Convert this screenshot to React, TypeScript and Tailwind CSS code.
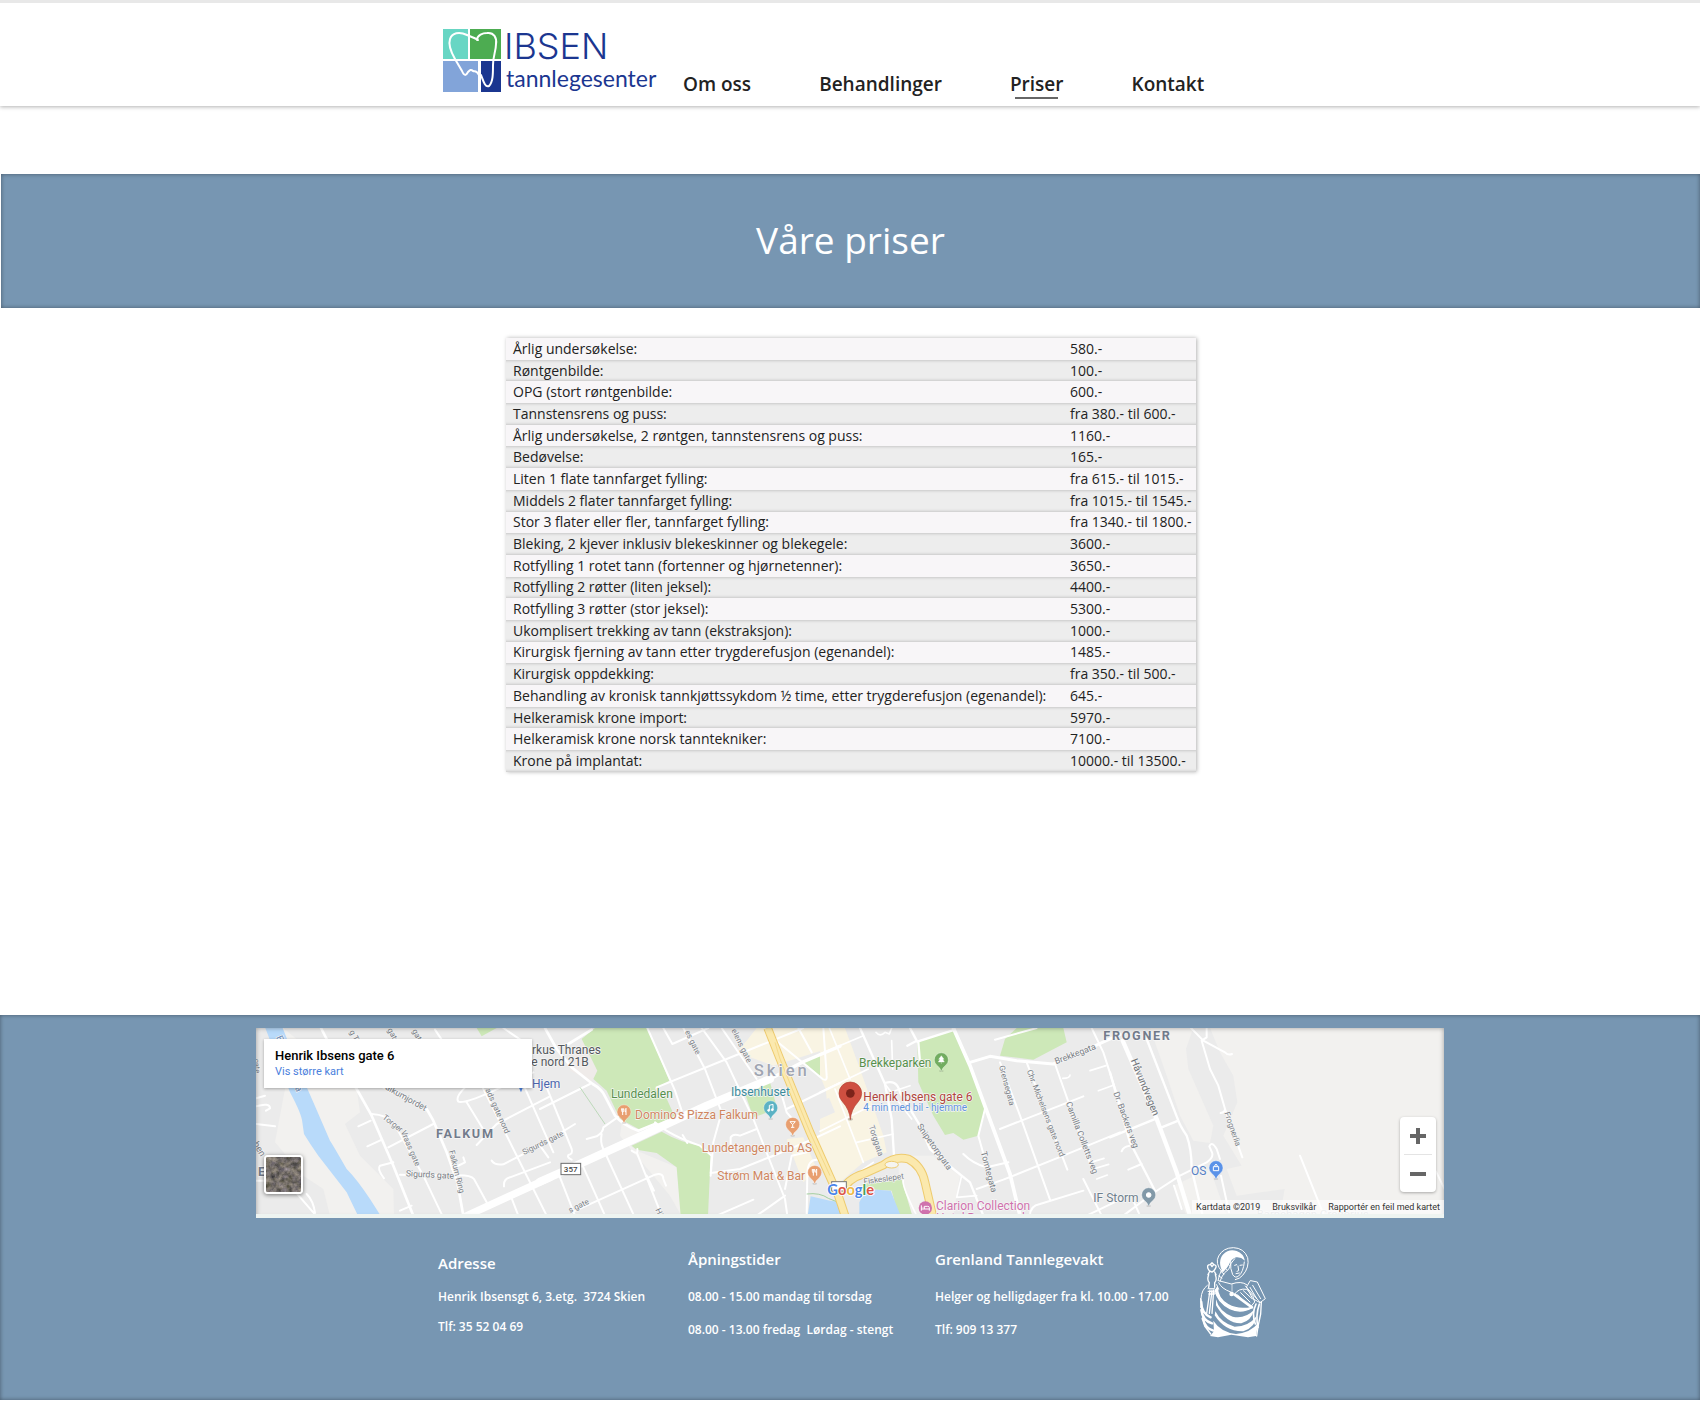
import { type ReactNode } from "react";

const prices: [string, string][] = [
  ["Årlig undersøkelse:", "580.-"],
  ["Røntgenbilde:", "100.-"],
  ["OPG (stort røntgenbilde:", "600.-"],
  ["Tannstensrens og puss:", "fra 380.- til 600.-"],
  ["Årlig undersøkelse, 2 røntgen, tannstensrens og puss:", "1160.-"],
  ["Bedøvelse:", "165.-"],
  ["Liten 1 flate tannfarget fylling:", "fra 615.- til 1015.-"],
  ["Middels 2 flater tannfarget fylling:", "fra 1015.- til 1545.-"],
  ["Stor 3 flater eller fler, tannfarget fylling:", "fra 1340.- til 1800.-"],
  ["Bleking, 2 kjever inklusiv blekeskinner og blekegele:", "3600.-"],
  ["Rotfylling 1 rotet tann (fortenner og hjørnetenner):", "3650.-"],
  ["Rotfylling 2 røtter (liten jeksel):", "4400.-"],
  ["Rotfylling 3 røtter (stor jeksel):", "5300.-"],
  ["Ukomplisert trekking av tann (ekstraksjon):", "1000.-"],
  ["Kirurgisk fjerning av tann etter trygderefusjon (egenandel):", "1485.-"],
  ["Kirurgisk oppdekking:", "fra 350.- til 500.-"],
  ["Behandling av kronisk tannkjøttssykdom ½ time, etter trygderefusjon (egenandel):", "645.-"],
  ["Helkeramisk krone import:", "5970.-"],
  ["Helkeramisk krone norsk tanntekniker:", "7100.-"],
  ["Krone på implantat:", "10000.- til 13500.-"],
];

const nav = ["Om oss", "Behandlinger", "Priser", "Kontakt"];

function Logo() {
  return (
    <svg viewBox="0 0 216 72" className="h-[72px] w-[216px] overflow-visible" role="img" aria-label="Ibsen tannlegesenter">
      <rect x="1" y="1" width="25" height="30" fill="#68d6c4" />
      <rect x="28" y="1" width="31" height="30" fill="#4dac51" />
      <rect x="1" y="33" width="35" height="31" fill="#82a4d9" />
      <rect x="39" y="33" width="20" height="31" fill="#1b3690" />
      <path
        d="M36 12 C31 9 29 9 25 7 C17 3 10 5 8 11 C6 17 9 24 13 31 L20 43 C22 48 24 48 26 44 C28 42 29 41 31 43 C33 44 34 42 37 47 M35 12 C35 7 41 5 45 5 C52 4 55 10 54 16 C54 23 51 28 51 37 C51 46 51 54 47 58 C43 60 41 52 39 47"
        fill="none"
        stroke="#fff"
        strokeWidth="2"
        strokeLinecap="round"
      />
      <text x="62" y="31" fontFamily="Inter, sans-serif" fontSize="36" fontWeight="300" fill="#1b3690">
        IBSEN
      </text>
      <text x="64" y="59" fontFamily="Lato, sans-serif" fontSize="23" fill="#1b3690">
        tannlegesenter
      </text>
    </svg>
  );
}

/* Map drawing. One unit is a third of a pixel; sections are laid out west to east. */
const SECTIONS = ["translate(0 0)", "translate(870 0)", "translate(1710 0)", "translate(2580 0)"];

type Shape = { fill: string; d: string };
const LIGHT = "#f2f1ef";
const GREEN = "#cde8b8";
const YELLOW = "#f9f4e3";
const WATER = "#b8dafa";

const areas: Shape[][] = [
  [
    { fill: LIGHT, d: "M60 57L100 57 320 240 330 310 285 345 330 440 430 540 432 620 240 620 220 540 160 500 75 400 105 240Z" },
    { fill: WATER, d: "M46 57L120 250Q155 315 157 340L162 375Q180 405 205 440L290 550 324 620 392 620 360 570Q320 510 290 480 250 410 240 395L190 280 155 200 98 57Z" },
    { fill: GREEN, d: "M680 57H740L695 82Z" },
  ],
  [
    { fill: "#efebe9", d: "M100 140L130 95 172 185 155 218 90 185Z" },
    { fill: LIGHT, d: "M245 345L300 370 260 400 290 425 410 475 424 620 390 560 340 500 280 430 240 380Z" },
    { fill: GREEN, d: "M125 90L165 57H322L388 215 345 238 362 270 378 265 405 325 300 362 240 330 200 245 160 210 172 185Z" },
    { fill: GREEN, d: "M275 410L365 368Q420 400 480 410L512 440 504 620H422L410 475 350 432 290 422Z" },
    { fill: GREEN, d: "M612 245L690 220 712 300 640 325Z" },
    { fill: YELLOW, d: "M590 130L620 95 650 57H900V110L860 120 700 170Z" },
    { fill: YELLOW, d: "M850 160L900 140V250L860 270Z" },
    { fill: YELLOW, d: "M820 385L900 350V560L830 420Z" },
    { fill: YELLOW, d: "M740 390L790 385 830 480 790 520 770 470Z" },
    { fill: GREEN, d: "M790 158L855 135 853 213Z" },
    { fill: WATER, d: "M812 562L870 575 905 580V620H803Z" },
  ],
  [
    { fill: YELLOW, d: "M0 57H75L120 180 190 380 200 430 130 460 60 520 0 420V330L45 310 0 200Z" },
    { fill: LIGHT, d: "M235 440L340 440 420 500 400 620H240Z" },
    { fill: GREEN, d: "M292 100L405 62 490 275 498 300 475 380 430 392 400 372 375 378 340 320 295 220Z" },
    { fill: GREEN, d: "M540 140L555 90 590 57H730L740 100 640 152Z" },
    { fill: GREEN, d: "M125 525L245 512 277 620H235L215 545 140 540Z" },
    { fill: WATER, d: "M0 578L58 590V620H0ZM118 580L140 540 212 545 242 620H118Z" },
  ],
  [
    { fill: LIGHT, d: "M120 57L170 200 210 320 250 395 300 402 310 350 235 180 228 120 250 57Z" },
    { fill: LIGHT, d: "M300 57L330 130 370 200 382 280 340 380 395 470 350 480 380 560 524 540 510 620H1010V57Z" },
    { fill: LIGHT, d: "M190 530L300 480 350 620H230Z" },
  ],
];

type Road = { w: number; d: string };
const roads: Road[][] = [
  [
    { w: 8, d: "M213 57L245 120 320 240 365 320 430 470 490 620M400 235L530 300 550 335 590 430 622 520 640 620" },
    { w: 6, d: "M365 315Q410 318 430 340L520 500 577 620M415 415L550 345M325 352L362 335M352 412L396 392M450 497L600 500Q660 495 672 510L710 580M605 480L645 460 640 445M430 460L390 470Q380 480 402 508M450 605L485 590" },
    { w: 6, d: "M645 235Q615 265 625 278 640 285 720 250L850 190M650 280L705 370M680 408L740 345 900 262M680 200L790 420 890 620M795 170L910 430M725 455Q735 470 760 466L870 410M762 532Q760 510 780 505L900 460M780 555L805 620M555 62L575 92M760 57L815 95" },
    { w: 6, d: "M18 345L75 352M18 268L45 260M18 292Q60 280 60 298L48 305M18 515H60M120 530L198 620M170 555Q190 575 195 612" },
    { w: 22, d: "M640 625L770 565 900 506" },
  ],
  [
    { w: 24, d: "M0 518L90 478 290 387 500 290 690 210" },
    { w: 10, d: "M690 210L790 158 900 112" },
    { w: 8, d: "M15 57L50 120 95 175 158 225Q185 240 195 262L225 320Q250 350 295 365L345 345M85 105L155 62" },
    { w: 6, d: "M322 57L405 245 425 305M370 57L397 105 505 57M350 235L560 150 790 57M430 57L495 180 545 310 520 400 512 500M485 57L560 160 640 330 735 570 742 620M545 57L650 210M775 57L815 130M690 80L848 210Q862 218 860 200L850 57" },
    { w: 6, d: "M720 240L740 310 770 345M740 300L900 222M690 445L830 385 900 352M345 340Q390 380 480 410L515 440 512 492 600 480 700 440M572 432L572 385Q580 372 600 380L650 360M530 620L640 572M650 620L735 560M735 540L755 440 800 430M800 620L802 490Q805 450 832 452" },
    { w: 6, d: "M140 390L170 382Q190 370 190 355L240 320M185 375Q180 400 190 420L282 620M275 425Q295 440 292 420M290 430L365 620M128 470L195 620M60 505L105 620M95 610L345 497Q370 490 370 510L378 530M320 500L342 545M428 378L442 402M0 300L150 225M20 235L95 420Q100 435 85 438 80 445 95 452M0 410L25 445M40 385L105 345" },
  ],
  [
    { w: 11, d: "M400 57L450 170 570 495 600 620" },
    { w: 9, d: "M450 160L510 142 590 155 700 165 800 122 900 76" },
    { w: 6, d: "M540 160L600 320 690 572M620 160L742 482M705 165L820 490M815 57L850 130 900 285M525 92L650 57M540 360L790 262M470 540L550 512 730 440 900 370M430 435Q460 465 500 475L565 460M495 300L475 380 500 470M630 620Q630 590 660 585L790 545M790 510L845 620M800 620L900 572" },
    { w: 7, d: "M195 222Q230 210 240 250L300 350 330 420 400 480 450 520 490 620M262 110L290 95 270 57M292 98L405 62M295 100L300 160M120 57L195 225 215 330 222 440" },
    { w: 5, d: "M168 70Q180 85 195 70L208 75 215 57M215 95L218 180M0 135L130 80M0 250L145 180M28 57L90 210M45 240L130 460M0 367L150 292M110 400L220 375M195 225L275 330M225 245L270 230M250 515Q245 530 290 620M425 500L410 565 470 560M80 515L160 460" },
    { w: 5, d: "M728 208Q750 208 750 198M810 185L858 170M835 245L882 228M820 458L852 448M820 480L866 466M830 510L862 498" },
  ],
  [
    { w: 13, d: "M38 95L140 330 200 490 240 620" },
    { w: 7, d: "M110 90L205 335Q210 350 230 380 245 420 245 480L278 620M155 355L205 335M0 385L140 328M0 190L60 400 135 545" },
    { w: 6, d: "M243 57L280 95 345 130Q355 140 366 135M290 57V85L275 95 300 180 325 230 345 300Q345 310 332 312M345 300L397 445M40 620L130 552 210 500 290 460Q312 445 306 430L298 412Q305 395 320 420L330 450M333 500L357 610M570 440L642 620M978 488L1004 540M55 482L95 465M35 427Q40 412 60 410M192 530L215 600M70 575L90 620" },
  ],
];

function Rotated({ x, y, a, size = 24, fill = "#7a7f86", children }: { x: number; y: number; a: number; size?: number; fill?: string; children: ReactNode }) {
  return (
    <text transform={`translate(${x} ${y}) rotate(${a})`} fontSize={size} fill={fill} stroke="#f4f4f4" strokeWidth="4" paintOrder="stroke">
      {children}
    </text>
  );
}

function Label({ x, y, fill, size = 36, weight = 400, spacing, children }: { x: number; y: number; fill: string; size?: number; weight?: number; spacing?: number; children: ReactNode }) {
  return (
    <text x={x} y={y} fontSize={size} fontWeight={weight} fill={fill} letterSpacing={spacing} stroke="#f7f7f7" strokeWidth="4" strokeLinejoin="round" paintOrder="stroke">
      {children}
    </text>
  );
}

function Pin({ x, y, fill, children }: { x: number; y: number; fill: string; children?: ReactNode }) {
  return (
    <g transform={`translate(${x} ${y})`}>
      <ellipse cx="0" cy="33" rx="7" ry="3" fill="#0002" />
      <path d="M0 34Q-4 22 -14 15A21 21 0 1 1 14 15Q4 22 0 34Z" fill={fill} stroke="#fff" strokeWidth="1" />
      <g fill="none" stroke="#fff" strokeWidth="3">
        {children}
      </g>
    </g>
  );
}

const fork = <path d="M-7 -11V-4Q-7 0 -4 0 -1 0 -1 -4V-11M-4 -11V9M6 9V-11Q3 -9 3 -1H6" />;

function MapDrawing() {
  return (
    <svg viewBox="18 57 3564 570" preserveAspectRatio="xMidYMid slice" className="block h-full w-full" fontFamily="Roboto, sans-serif" role="img" aria-label="Kart over Skien">
      <rect x="18" y="57" width="3564" height="570" fill="#ebebeb" />
      {areas.map((list, i) => (
        <g key={i} transform={SECTIONS[i]}>
          {list.map((s) => (
            <path key={s.d} d={s.d} fill={s.fill} />
          ))}
        </g>
      ))}
      {roads.map((list, i) => (
        <g key={i} transform={SECTIONS[i]} fill="none" stroke="#fff" strokeLinecap="round" strokeLinejoin="round">
          {list.map((r) => (
            <path key={r.d} d={r.d} strokeWidth={r.w} />
          ))}
        </g>
      ))}

      <path d="M990 235L1065 345" stroke="#a5cfa0" strokeWidth="2" />
      <path d="M1670 555Q1710 550 1735 568L1765 580" stroke="#a5cfa0" strokeWidth="3" fill="none" />
      <g fill="none" strokeLinejoin="round">
        <path d="M1553 57L1590 150 1680 370 1765 560 1785 620M1775 550Q1790 510 1840 495L1900 468Q1935 440 1975 450 2015 470 2025 520L2048 620" stroke="#eecb6e" strokeWidth="26" />
        <path d="M1553 57L1590 150 1680 370 1765 560 1785 620M1775 550Q1790 510 1840 495L1900 468Q1935 440 1975 450 2015 470 2025 520L2048 620" stroke="#fbe9ae" strokeWidth="20" />
        <ellipse cx="1925" cy="467" rx="20" ry="10" fill="#f5f4f0" stroke="#eecb6e" strokeWidth="3" />
        <path d="M1575 100L1590 150 1680 370 1740 500" stroke="#f5d98a" strokeWidth="3" />
      </g>

      <g transform={SECTIONS[0]}>
        <Rotated x={78} y={85} a={66} size={28} fill="#5f86b8">Elva</Rotated>
        <Rotated x={134} y={236} a={66} size={28} fill="#5f86b8">a</Rotated>
        <Rotated x={298} y={68} a={62}>g Torg</Rotated>
        <Rotated x={412} y={62} a={62}>gate</Rotated>
        <Rotated x={486} y={65} a={62}>gata</Rotated>
        <Rotated x={404} y={240} a={29} size={26}>alkumjordet</Rotated>
        <Rotated x={396} y={328} a={38}>Torger</Rotated>
        <Rotated x={452} y={368} a={67}>Vraas gate</Rotated>
        <Rotated x={597} y={426} a={76}>Falkum Ring</Rotated>
        <Rotated x={467} y={502} a={3} size={26}>Sigurds gate</Rotated>
        <Rotated x={706} y={242} a={66}>ads gate nord</Rotated>
        <Rotated x={822} y={438} a={-26}>Sigurds gate</Rotated>
        <Rotated x={8} y={405} a={58} size={28}>ben</Rotated>
        <Rotated x={12} y={150} a={85} size={22}>gate</Rotated>
        <Label x={558} y={386} size={38} weight={700} spacing={5} fill="#737c8c">FALKUM</Label>
        <Label x={24} y={500} size={38} weight={700} fill="#737c8c">E</Label>
        <path d="M805 232H820L813 250Z" fill="#4c83e0" />
        <Label x={846} y={135} fill="#54585c">rkus Thranes</Label>
        <Label x={844} y={171} fill="#54585c">e nord 21B</Label>
        <Label x={846} y={237} fill="#4a64ad">Hjem</Label>
      </g>

      <g transform={SECTIONS[1]}>
        <Rotated x={90} y={612} a={-26}>s gate</Rotated>
        <Rotated x={346} y={602} a={66}>Hj</Rotated>
        <Rotated x={434} y={68} a={64}>es gate</Rotated>
        <Rotated x={574} y={64} a={64}>elens gate</Rotated>
        <Label x={641} y={200} size={50} weight={500} spacing={9} fill="#a0a5b2">Skien</Label>
        <Label x={213} y={266} size={36} fill="#56904c">Lundedalen</Label>
        <Label x={573} y={260} fill="#3a8b9c">Ibsenhuset</Label>
        <Label x={285} y={331} fill="#cf855e">Domino’s Pizza Falkum</Label>
        <Label x={485} y={428} fill="#cf855e">Lundetangen pub AS</Label>
        <Label x={532} y={514} fill="#cf855e">Strøm Mat &amp; Bar</Label>
        <rect x="63" y="463" width="59" height="34" fill="#fff" stroke="#6b6b6b" strokeWidth="3" />
        <text x="92" y="489" textAnchor="middle" fontSize="24" fontWeight="500" fill="#444">357</text>
        <Pin x={252} y={309} fill="#e89f70">{fork}</Pin>
        <Pin x={692} y={297} fill="#5bb2c4">
          <path d="M-4 6V-8L7 -11V4" />
          <circle cx="-6" cy="7" r="3" fill="#fff" />
          <circle cx="5" cy="5" r="3" fill="#fff" />
        </Pin>
        <Pin x={758} y={347} fill="#e89f70">
          <path d="M-8 -9H8L0 0ZM0 0V8M-5 8H5" />
        </Pin>
        <Pin x={824} y={491} fill="#e89f70">{fork}</Pin>
      </g>

      <g transform={SECTIONS[2]}>
        <Rotated x={146} y={352} a={72}>Torggata</Rotated>
        <Rotated x={290} y={352} a={55} size={26}>Snipetorpgata</Rotated>
        <Rotated x={482} y={430} a={75} size={26}>Tomtegata</Rotated>
        <Rotated x={537} y={172} a={75}>Grensegata</Rotated>
        <Rotated x={620} y={186} a={69}>Chr. Michelsens gate nord</Rotated>
        <Rotated x={737} y={282} a={69} size={26}>Camilla Colletts veg</Rotated>
        <Rotated x={708} y={166} a={-21} size={26}>Brekkegata</Rotated>
        <Rotated x={132} y={526} a={-8}>Fiskeslepet</Rotated>
        <Label x={117} y={174} fill="#56904c">Brekkeparken</Label>
        <Pin x={364} y={153} fill="#72ad60">
          <path d="M0 -13L8 -2H4L9 6H-9L-4 -2H-8ZM0 6V12" fill="#fff" strokeWidth="1" />
        </Pin>
        <Label x={348} y={602} fill="#cf72ad">Clarion Collection</Label>
        <Label x={348} y={640} fill="#cf72ad">Hotel Bryggeparken</Label>
        <circle cx="316" cy="597" r="20" fill="#cf72ad" />
        <path d="M304 589V605M304 600H328V605M328 600V596Q328 592 323 592H313V600M308 595H310" fill="none" stroke="#fff" strokeWidth="3" />
        <ellipse cx="91" cy="331" rx="8" ry="4" fill="#0003" />
        <path d="M91 332Q89 302 68 279 57 267 57 253A34 34 0 0 1 125 253Q125 267 114 279 93 302 91 332Z" fill="#cf4f40" stroke="#b34236" strokeWidth="2" />
        <circle cx="91" cy="253" r="13" fill="#7d231a" />
        <Label x={130} y={276} fill="#b0453b">Henrik Ibsens gate 6</Label>
        <Label x={130} y={307} size={30} fill="#5f92dc">4 min med bil - hjemme</Label>
        <rect x="35" y="518" width="44" height="28" fill="#fff" stroke="#777" strokeWidth="3" />
        <text x="22" y="557" fontFamily="Lato, sans-serif" fontSize="44" fontWeight="700" stroke="#fff" strokeWidth="5" paintOrder="stroke">
          <tspan fill="#4a86ea">G</tspan>
          <tspan fill="#dd5546">o</tspan>
          <tspan fill="#efb944">o</tspan>
          <tspan fill="#4a86ea">g</tspan>
          <tspan fill="#46a05c">l</tspan>
          <tspan fill="#dd5546">e</tspan>
        </text>
      </g>

      <g transform={SECTIONS[3]}>
        <Label x={-20} y={94} size={38} weight={700} spacing={5} fill="#737c8c">FROGNER</Label>
        <Rotated x={62} y={154} a={68} size={30} fill="#6b6f75">Håvundvegen</Rotated>
        <Rotated x={10} y={252} a={70} size={26}>Dr. Backers veg</Rotated>
        <Rotated x={343} y={312} a={71}>Frognerlia</Rotated>
        <Label x={243} y={498} fill="#5580c4">OS</Label>
        <Pin x={318} y={477} fill="#5a92e8">
          <path d="M-8 -4H8V8H-8ZM-4 -4Q-4 -11 0 -11 4 -11 4 -4" />
        </Pin>
        <Label x={-50} y={580} fill="#6e7f8d">IF Storm</Label>
        <Pin x={116} y={558} fill="#8299a8">
          <circle r="7" fill="#fff" />
        </Pin>
        <Label x={440} y={626} size={34} fill="#d3d5d6">Barnehagen Gregorius</Label>
      </g>
    </svg>
  );
}

function SatelliteThumb() {
  return (
    <svg viewBox="0 0 36 36" className="h-full w-full">
      <filter id="terrain" x="0" y="0" width="100%" height="100%" colorInterpolationFilters="sRGB">
        <feTurbulence type="fractalNoise" baseFrequency="0.18" numOctaves="4" seed="8" />
        <feColorMatrix values="0.55 0.1 0 0 0.13  0.5 0.1 0 0 0.13  0.5 0 0.1 0 0.11  0 0 0 0 1" />
      </filter>
      <rect width="36" height="36" fill="#77736d" />
      <rect width="36" height="36" filter="url(#terrain)" />
    </svg>
  );
}

function LocationMap() {
  return (
    <section className="relative mx-auto h-[190px] w-full max-w-[1188px] overflow-hidden" aria-label="Kart">
      <MapDrawing />
      <div className="pointer-events-none absolute inset-0 shadow-[inset_0_0_5px_rgba(0,0,0,0.35)]" />
      <div className="pointer-events-none absolute inset-x-0 bottom-0 h-1 bg-[#eef4f1]" />
      <div className="absolute left-2 top-[11px] flex h-[49px] w-[268px] flex-col bg-white px-[11px] pt-2 font-[Roboto,sans-serif] shadow-[0_1px_3px_rgba(0,0,0,0.3)]">
        <h2 className="text-[13px] font-medium leading-[18px] text-black">Henrik Ibsens gate 6</h2>
        <a href="#kart" className="text-[11px] leading-[14px] text-[#4a80dc]">Vis større kart</a>
      </div>
      <button aria-label="Vis satellittbilder" className="absolute bottom-6 left-2 h-[39px] w-[39px] overflow-hidden rounded-sm border-2 border-white shadow-[0_1px_4px_rgba(0,0,0,0.5)]">
        <SatelliteThumb />
      </button>
      <div className="absolute bottom-[26px] right-2 flex w-9 flex-col items-center rounded-sm bg-white shadow-[0_1px_3px_rgba(0,0,0,0.3)]">
        <button aria-label="Zoom inn" className="flex h-[37px] w-full items-center justify-center">
          <svg viewBox="0 0 16 16" className="h-4 w-4" stroke="#666" strokeWidth="4">
            <path d="M0 8H16M8 0V16" />
          </svg>
        </button>
        <div className="h-px w-7 bg-[#e4e4e4]" />
        <button aria-label="Zoom ut" className="flex h-[37px] w-full items-center justify-center">
          <svg viewBox="0 0 16 16" className="h-4 w-4" stroke="#666" strokeWidth="4">
            <path d="M0 8H16" />
          </svg>
        </button>
      </div>
      <div className="absolute bottom-1 right-0 flex gap-3 bg-white/60 px-1 font-[Roboto,sans-serif] text-[9px] leading-[14px] text-[#333]">
        <span>Kartdata ©2019</span>
        <a href="#vilkar">Bruksvilkår</a>
        <a href="#feil">Rapportér en feil med kartet</a>
      </div>
    </section>
  );
}

function Emblem() {
  return (
    <svg viewBox="50 45 210 285" className="h-[95px] w-[70px] shrink-0" fill="none" stroke="#fff" strokeWidth="4" strokeLinecap="round" strokeLinejoin="round" role="img" aria-label="Apollonia">
      <path d="M121 124Q100 100 112 78 126 53 156 53 188 54 199 83 205 112 184 136 176 146 162 149" strokeWidth="3" />
      <path d="M118 112Q112 88 126 73 142 56 166 63 186 70 191 92 178 80 164 82 148 88 143 104 136 116 124 128Z" fill="#fff" stroke="none" />
      <path d="M148 92Q146 118 154 134 162 146 172 138 186 126 189 96M160 106L166 104M176 106L183 105M170 108L172 122 167 124M164 131L174 129" strokeWidth="3" />
      <path d="M152 84Q136 98 132 112L122 120Q114 130 110 152M160 86Q146 100 142 118L130 128Q120 140 116 154M136 98L144 106M128 112L138 120M118 124L128 132M112 138L122 144" strokeWidth="3" />
      <path d="M80 116Q76 104 86 104L92 98 98 104Q108 106 102 116 98 124 92 126 82 124 80 116ZM84 126L80 134M100 126L104 134M82 134Q76 150 84 158L82 172M102 134Q108 150 100 158V172M88 104L92 110 97 104" />
      <path d="M86 180L76 250M92 180L84 250M97 180L92 250" />
      <path d="M80 176H100Q106 180 100 184H82M80 184Q104 186 102 192H82M84 192H98" strokeWidth="3" />
      <path d="M78 166Q60 180 59 206 62 222 58 232M106 164L112 178M112 152L150 162Q180 152 196 164M112 158Q120 176 148 186" strokeWidth="3" />
      <path d="M152 162V184" strokeWidth="2" />
      <circle cx="151" cy="192" r="5" fill="#fff" />
      <path d="M208 152L228 156 252 206 236 218 214 206 196 172ZM236 218L232 212 192 168M214 166L238 206M206 172L226 206" strokeWidth="3" />
      <path d="M160 192Q172 174 196 178L214 196 220 216 210 228M168 194L196 222M178 188L206 216M186 182L212 206" strokeWidth="3" />
      <path d="M160 194L212 232" strokeWidth="8" />
      <path d="M108 172Q108 206 140 224 172 242 212 232 180 252 146 236 108 216 102 182Z" fill="#fff" />
      <path d="M104 208Q114 246 154 260 190 268 218 240 210 272 180 280 136 282 104 226Z" fill="#fff" stroke="none" />
      <path d="M102 244Q120 280 160 290 202 290 226 258 222 292 186 304 132 306 100 256Z" fill="#fff" stroke="none" />
      <path d="M96 272Q118 306 164 312 208 308 230 280L224 318 200 322 150 314 110 322 86 318 98 304Z" fill="#fff" stroke="none" />
      <path d="M60 216Q60 250 88 262M60 240Q64 272 92 280M64 266Q72 296 96 302" strokeWidth="7" />
      <path d="M58 206L62 250 70 288 88 312M240 216L238 252 230 290 226 318" strokeWidth="4" />
      <path d="M224 222Q210 252 222 282M234 222Q222 258 230 292" strokeWidth="5" />
    </svg>
  );
}

export default function App() {
  return (
    <div className="min-h-screen bg-white font-['Open_Sans',sans-serif] text-[#222]">
      <header className="border-t-[3px] border-[#e8e8e8] bg-white shadow-[0_1px_4px_rgba(0,0,0,0.3)]">
        <div className="mx-auto flex h-[103px] max-w-[816px] items-end">
          <a href="#hjem" className="mb-[6px] w-[241px] shrink-0">
            <Logo />
          </a>
          <nav className="mb-[7px] flex grow gap-[68px] text-[19px] font-semibold leading-6">
            {nav.map((item) => (
              <a key={item} href={`#${item}`} className="flex flex-col items-center gap-px whitespace-nowrap">
                {item}
                <span className={item === "Priser" ? "h-[2px] w-[43px] bg-[#666]" : "h-[2px] w-[43px]"} />
              </a>
            ))}
          </nav>
        </div>
      </header>

      <main>
        <section className="ml-px mt-[68px] flex h-[134px] items-center justify-center bg-[#7796b2] pb-[2px] shadow-[inset_0_0_4px_rgba(0,0,0,0.4)]">
          <h1 className="text-[37px] leading-[50px] text-white">Våre priser</h1>
        </section>
        <div className="ml-[2px] mt-[30px]">
          <table className="mx-auto h-[434px] w-full max-w-[690px] border-collapse text-[14px] leading-5 shadow-[1px_0_4px_rgba(0,0,0,0.3)]">
            <tbody>
              {prices.map(([label, price]) => (
                <tr key={label} className="odd:bg-[#f8f6f8] even:bg-[#ededed] even:shadow-[inset_0_4px_3px_-3px_rgba(0,0,0,0.16),inset_0_-4px_3px_-3px_rgba(0,0,0,0.16)]">
                  <th scope="row" className="whitespace-nowrap p-0 pl-[7px] text-left font-normal">{label}</th>
                  <td className="w-[126px] whitespace-nowrap p-0">{price}</td>
                </tr>
              ))}
            </tbody>
          </table>
        </div>
      </main>

      <footer className="mt-[243px] bg-[#7796b2] pt-[13px] pb-[60px] text-white shadow-[inset_0_0_4px_rgba(0,0,0,0.4)]">
        <LocationMap />
        <div className="mx-auto flex max-w-[836px] pl-[6px] pt-[27px] text-[12px] font-semibold leading-5">
          <section className="w-[250px] shrink-0 pt-2">
            <h2 className="text-[15px] font-semibold">Adresse</h2>
            <p className="mt-[14px] whitespace-pre">Henrik Ibsensgt 6, 3.etg.  3724 Skien</p>
            <p className="mt-[10px]">Tlf: 35 52 04 69</p>
          </section>
          <section className="w-[247px] shrink-0 pt-1">
            <h2 className="text-[15px] font-semibold">Åpningstider</h2>
            <p className="mt-[18px]">08.00 - 15.00 mandag til torsdag</p>
            <p className="mt-[13px] whitespace-pre">08.00 - 13.00 fredag  Lørdag - stengt</p>
          </section>
          <section className="w-[263px] shrink-0 pt-1">
            <h2 className="text-[15px] font-semibold">Grenland Tannlegevakt</h2>
            <p className="mt-[18px]">Helger og helligdager fra kl. 10.00 - 17.00</p>
            <p className="mt-[13px]">Tlf: 909 13 377</p>
          </section>
          <Emblem />
        </div>
      </footer>
    </div>
  );
}
